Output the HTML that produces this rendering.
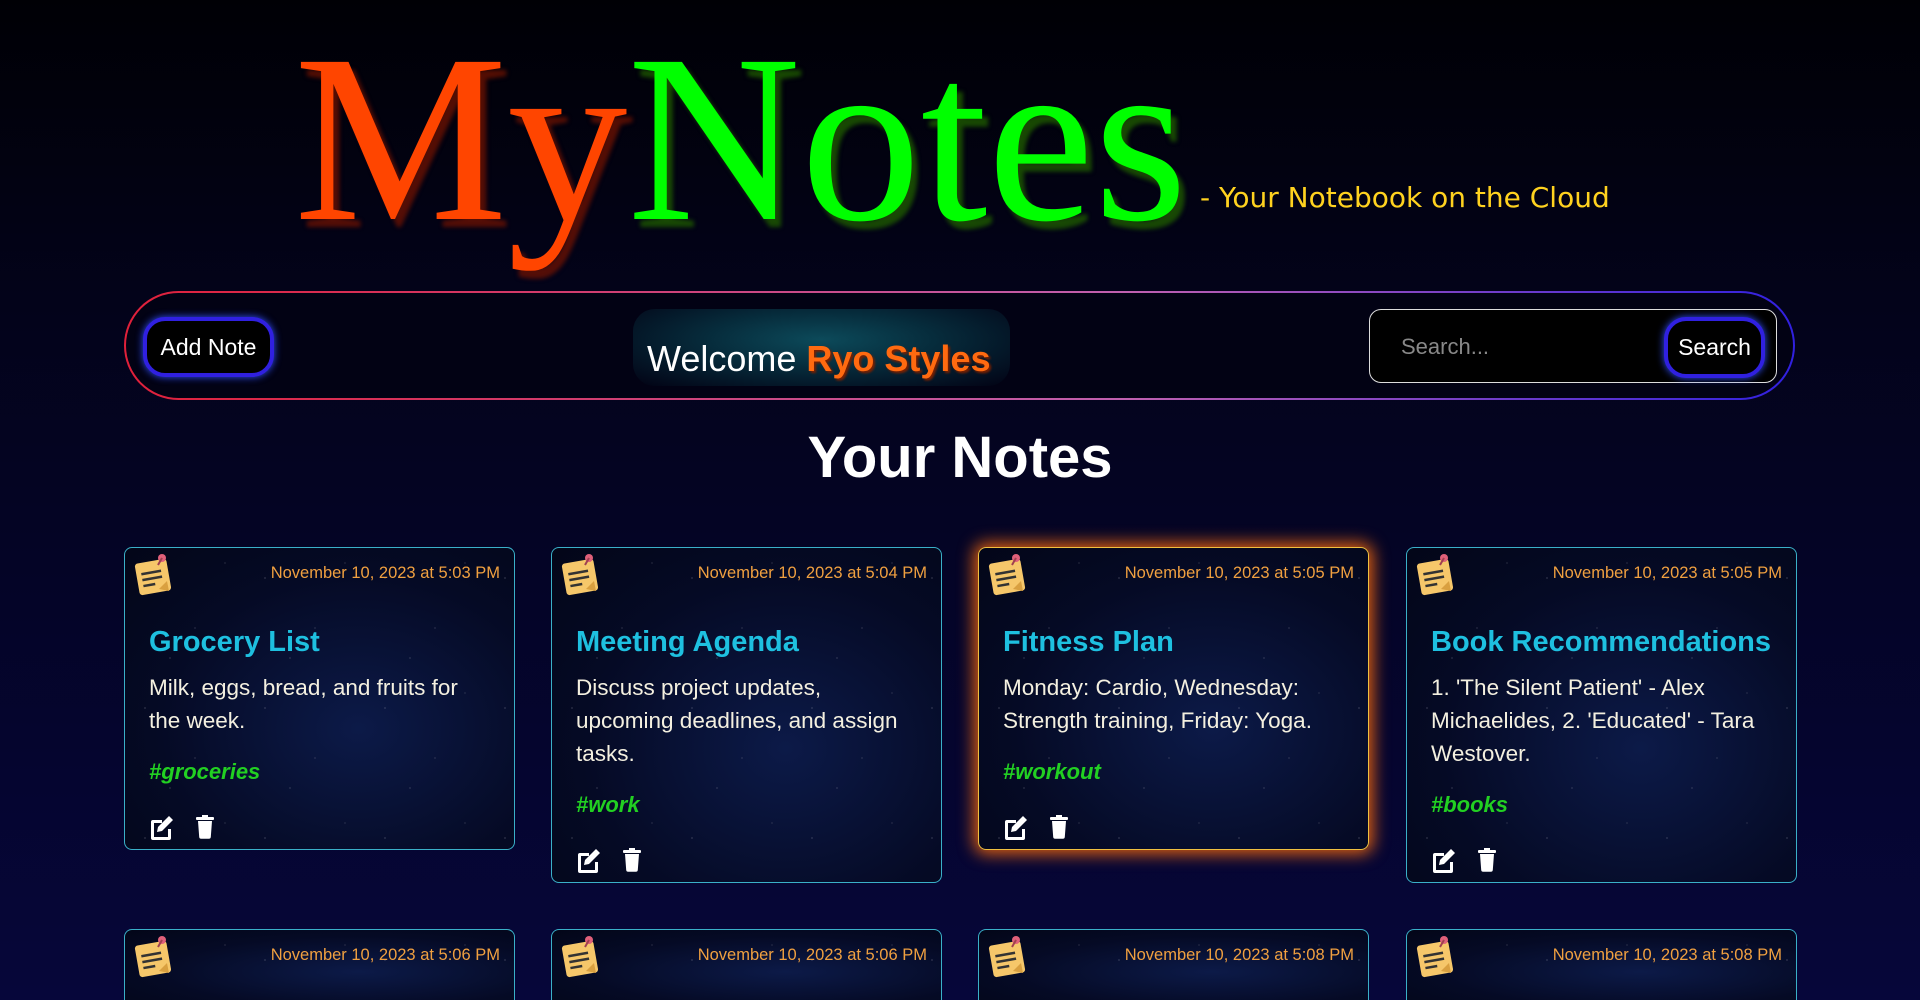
<!DOCTYPE html>
<html><head><meta charset="utf-8"><style>
*{margin:0;padding:0;box-sizing:border-box}
html{width:1920px;height:1000px;overflow:hidden}
body{width:1920px;height:1000px;overflow:hidden;background:linear-gradient(180deg,#000005 0%,#03031a 30%,#06063a 100%);font-family:"Liberation Sans","DejaVu Sans",sans-serif;color:#fff;position:relative}
.abs{position:absolute}
.title{left:294px;top:18px;font-family:"Liberation Serif",serif;font-size:240px;line-height:1;white-space:nowrap;text-shadow:6px 8px 4px rgba(120,20,0,.7)}
.title .my{color:#ff4500}
.title .no{color:#00ff00;text-shadow:6px 8px 4px rgba(30,90,0,.8)}
.sub{left:1200px;top:181px;font-family:"Comic Sans MS","DejaVu Sans",sans-serif;font-size:28px;color:#ffd21f;white-space:nowrap}
.nav{left:124px;top:291px;width:1671px;height:109px;border-radius:55px;padding:2px;background:linear-gradient(90deg,#e0203a,#c060b0 60%,#3020e0)}
.nav>div{width:100%;height:100%;border-radius:53px;background:#020214}
.btn{border:4px solid #3020e0;border-radius:22px;background:#000;box-shadow:0 0 8px #3050ff;color:#fff;font-size:23px;display:flex;align-items:center;justify-content:center}
.welcome{left:633px;top:309px;width:377px;height:77px;border-radius:22px;background:radial-gradient(ellipse at 50% 40%,#0c4a5a 0%,#062a3a 45%,rgba(2,2,20,0) 100%);font-size:36px;white-space:nowrap;padding-top:29px;padding-left:14px}
.welcome b{color:#ff6a10;text-shadow:2px 2px 2px #7a2000}
.search{left:1369px;top:309px;width:408px;height:74px;border:1.5px solid #ddd;border-radius:12px;background:#000}
.search span{position:absolute;left:31px;top:24px;font-size:22px;color:#888}
.yn{left:0;width:1920px;top:424px;text-align:center;font-size:58px;font-weight:bold}
.card{width:391px;border:1.5px solid #3ab0c8;border-radius:8px;background:radial-gradient(ellipse at 60% 60%,#0c1a48 0%,#050a25 60%,#030618 100%);overflow:hidden}
.card.glow{border-color:#f0c040;box-shadow:0 0 16px 4px #e06010}
.stars{position:absolute;inset:0;background-image:radial-gradient(1px 1px at 20px 30px,#aab 50%,transparent 51%),radial-gradient(1px 1px at 70px 80px,#889 50%,transparent 51%),radial-gradient(1px 1px at 45px 110px,#99a 50%,transparent 51%),radial-gradient(1px 1px at 100px 15px,#778 50%,transparent 51%);background-size:120px 130px;opacity:.6}
.date{position:absolute;right:14px;top:16px;font-size:16.5px;color:#f0a040}
.ic{position:absolute;left:8px;top:3px}
.ct{position:absolute;left:24px;top:78px;font-size:29px;font-weight:bold;color:#1ec0e0;white-space:nowrap}
.cb{position:absolute;left:24px;top:123px;width:340px;font-size:22.5px;line-height:33px;color:#f4f0e0}
.tag{position:absolute;left:24px;font-size:22px;font-weight:bold;font-style:italic;color:#22d022}
.act{position:absolute;left:24px;display:flex;gap:18px}
</style></head><body>
<div class="abs title"><span class="my">My</span><span class="no">Notes</span></div>
<div class="abs sub">- Your Notebook on the Cloud</div>
<div class="abs nav"><div></div></div>
<div class="abs btn" style="left:143px;top:317px;width:131px;height:60px">Add Note</div>
<div class="abs welcome">Welcome <b>Ryo Styles</b></div>
<div class="abs search"><span>Search...</span></div>
<div class="abs btn" style="left:1664px;top:317px;width:101px;height:61px">Search</div>
<div class="abs yn">Your Notes</div>

<svg width="0" height="0" style="position:absolute"><defs>
<g id="note"><rect x="4" y="10" width="32" height="32" rx="3" fill="#f6c76a" transform="rotate(-10 20 26)"/><path d="M26 38 l8 -8 l2 10z" fill="#d9a040"/><rect x="9" y="20" width="20" height="2.5" fill="#333" transform="rotate(-10 20 26)"/><rect x="9" y="26" width="20" height="2.5" fill="#333" transform="rotate(-10 20 26)"/><rect x="9" y="32" width="12" height="2.5" fill="#333" transform="rotate(-10 20 26)"/><circle cx="29" cy="7" r="4" fill="#e0607a"/><line x1="29" y1="7" x2="25" y2="14" stroke="#a04050" stroke-width="2"/></g>
<g id="edit"><path d="M4 6 h9 v3 h-8 v14 h14 v-8 h3 v9 a2 2 0 0 1-2 2 h-16 a2 2 0 0 1-2-2 v-16 a2 2 0 0 1 2-2z" fill="#fff"/><path d="M20 2 l4 4 l-11 11 l-5 1 l1 -5z" fill="#fff"/></g>
<g id="trash"><rect x="3" y="3" width="18" height="3" rx="1" fill="#fff"/><rect x="9" y="1" width="6" height="3" fill="#fff"/><path d="M5 7 h14 l-1.2 16 a2 2 0 0 1-2 1.8 h-7.6 a2 2 0 0 1-2-1.8z" fill="#fff"/></g>
</defs></svg>

<div class="abs card" style="left:124px;top:547px;height:303px"><div class="stars"></div>
<svg class="ic" width="48" height="48"><use href="#note"/></svg>
<div class="date">November 10, 2023 at 5:03 PM</div>
<div class="ct">Grocery List</div>
<div class="cb">Milk, eggs, bread, and fruits for the week.</div>
<div class="tag" style="top:211px">#groceries</div>
<div class="act" style="top:266px"><svg width="26" height="26"><use href="#edit"/></svg><svg width="24" height="26"><use href="#trash"/></svg></div>
</div>
<div class="abs card" style="left:551px;top:547px;height:336px"><div class="stars"></div>
<svg class="ic" width="48" height="48"><use href="#note"/></svg>
<div class="date">November 10, 2023 at 5:04 PM</div>
<div class="ct">Meeting Agenda</div>
<div class="cb">Discuss project updates, upcoming deadlines, and assign tasks.</div>
<div class="tag" style="top:244px">#work</div>
<div class="act" style="top:299px"><svg width="26" height="26"><use href="#edit"/></svg><svg width="24" height="26"><use href="#trash"/></svg></div>
</div>
<div class="abs card glow" style="left:978px;top:547px;height:303px"><div class="stars"></div>
<svg class="ic" width="48" height="48"><use href="#note"/></svg>
<div class="date">November 10, 2023 at 5:05 PM</div>
<div class="ct">Fitness Plan</div>
<div class="cb">Monday: Cardio, Wednesday: Strength training, Friday: Yoga.</div>
<div class="tag" style="top:211px">#workout</div>
<div class="act" style="top:266px"><svg width="26" height="26"><use href="#edit"/></svg><svg width="24" height="26"><use href="#trash"/></svg></div>
</div>
<div class="abs card" style="left:1406px;top:547px;height:336px"><div class="stars"></div>
<svg class="ic" width="48" height="48"><use href="#note"/></svg>
<div class="date">November 10, 2023 at 5:05 PM</div>
<div class="ct">Book Recommendations</div>
<div class="cb">1. 'The Silent Patient' - Alex Michaelides, 2. 'Educated' - Tara Westover.</div>
<div class="tag" style="top:244px">#books</div>
<div class="act" style="top:299px"><svg width="26" height="26"><use href="#edit"/></svg><svg width="24" height="26"><use href="#trash"/></svg></div>
</div>
<div class="abs card" style="left:124px;top:929px;height:71px;border-bottom:none;border-radius:8px 8px 0 0"><div class="stars"></div><svg class="ic" width="48" height="48"><use href="#note"/></svg><div class="date">November 10, 2023 at 5:06 PM</div></div>
<div class="abs card" style="left:551px;top:929px;height:71px;border-bottom:none;border-radius:8px 8px 0 0"><div class="stars"></div><svg class="ic" width="48" height="48"><use href="#note"/></svg><div class="date">November 10, 2023 at 5:06 PM</div></div>
<div class="abs card" style="left:978px;top:929px;height:71px;border-bottom:none;border-radius:8px 8px 0 0"><div class="stars"></div><svg class="ic" width="48" height="48"><use href="#note"/></svg><div class="date">November 10, 2023 at 5:08 PM</div></div>
<div class="abs card" style="left:1406px;top:929px;height:71px;border-bottom:none;border-radius:8px 8px 0 0"><div class="stars"></div><svg class="ic" width="48" height="48"><use href="#note"/></svg><div class="date">November 10, 2023 at 5:08 PM</div></div>
</body></html>
